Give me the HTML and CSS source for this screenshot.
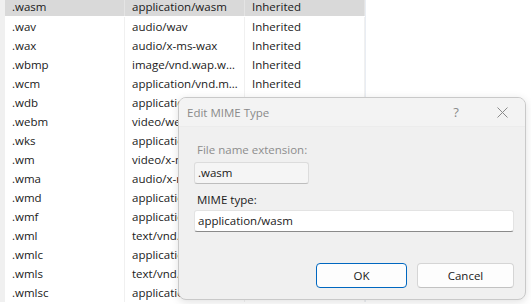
FILE: index.html
```
<!DOCTYPE html>
<html lang="en">

<head>
    <meta charset="utf-8">
    <title>MIME Types</title>
    <link rel="stylesheet" href="styles.css">
</head>

<body>
    <div class="screen">
        <div class="list">
            <div class="row selected"><span>.wasm</span><span>application/wasm</span><span>Inherited</span></div>
            <div class="row"><span>.wav</span><span>audio/wav</span><span>Inherited</span></div>
            <div class="row"><span>.wax</span><span>audio/x-ms-wax</span><span>Inherited</span></div>
            <div class="row"><span>.wbmp</span><span>image/vnd.wap.wbmp</span><span>Inherited</span></div>
            <div class="row"><span>.wcm</span><span>application/vnd.ms-works</span><span>Inherited</span></div>
            <div class="row"><span>.wdb</span><span>application/vnd.ms-works</span><span>Inherited</span></div>
            <div class="row"><span>.webm</span><span>video/webm</span><span>Inherited</span></div>
            <div class="row"><span>.wks</span><span>application/vnd.ms-works</span><span>Inherited</span></div>
            <div class="row"><span>.wm</span><span>video/x-ms-wm</span><span>Inherited</span></div>
            <div class="row"><span>.wma</span><span>audio/x-ms-wma</span><span>Inherited</span></div>
            <div class="row"><span>.wmd</span><span>application/x-ms-wmd</span><span>Inherited</span></div>
            <div class="row"><span>.wmf</span><span>application/x-msmetafile</span><span>Inherited</span></div>
            <div class="row"><span>.wml</span><span>text/vnd.wap.wml</span><span>Inherited</span></div>
            <div class="row"><span>.wmlc</span><span>application/vnd.wap.wmlc</span><span>Inherited</span></div>
            <div class="row"><span>.wmls</span><span>text/vnd.wap.wmlscript</span><span>Inherited</span></div>
            <div class="row"><span>.wmlsc</span><span>application/vnd.wap.wmlscriptc</span><span>Inherited</span></div>
        </div>

        <div class="dialog">
            <div class="titlebar">
                <span class="title">Edit MIME Type</span>
                <div class="caption_btns">
                    <span class="cap_btn help">?</span>
                    <span class="cap_btn">
                        <svg width="11" height="11" viewBox="0 0 11 11">
                            <path d="M0.5 0.5 L10.5 10.5 M10.5 0.5 L0.5 10.5" stroke="#8a8a8a" stroke-width="1" fill="none" />
                        </svg>
                    </span>
                </div>
            </div>
            <div class="dialog_body">
                <label class="lbl disabled">File name extension:</label>
                <div class="input small">.wasm</div>
                <label class="lbl">MIME type:</label>
                <div class="input wide">application/wasm</div>
                <div class="buttons">
                    <button class="btn default">OK</button>
                    <button class="btn cancel">Cancel</button>
                </div>
            </div>
        </div>
    </div>
</body>

</html>
```

FILE: styles.css
```
body {
    margin: 0;
    font-family: "Open Sans", "Noto Sans", sans-serif;
    font-size: 11.5px;
    color: #1a1a1a;
    background-color: white;
}

.screen {
    position: relative;
    width: 531px;
    height: 304px;
    overflow: hidden;
}

/* ---------- LIST ---------- */
.list {
    width: 366px;
    height: 100%;
    box-sizing: border-box;
    background-color: white;
    border-left: 5px solid #f0f0f0;
    border-right: 1px solid #e9edf3;
    margin-top: -2px;
}

.row {
    display: grid;
    grid-template-columns: 120px 120px 120px;
    height: 19px;
    line-height: 19px;
}

.row span {
    padding-left: 7px;
    padding-right: 4px;
    white-space: nowrap;
    overflow: hidden;
    text-overflow: ellipsis;
    border-right: 1px solid #f0f0f0;
}

.row.selected {
    background-color: #d9d9d9;
    height: 18px;
    line-height: 18px;
    margin-bottom: 1px;
}

.row.selected span {
    border-right-color: #e4e4e4;
}

/* ---------- DIALOG ---------- */
.dialog {
    position: absolute;
    left: 178px;
    top: 97px;
    width: 348px;
    height: 203px;
    box-sizing: border-box;
    background-color: #f0f0f0;
    border: 1px solid #c9c9c9;
    border-radius: 8px;
    box-shadow: 0 2px 8px rgba(0, 0, 0, 0.12);
    overflow: hidden;
}

.titlebar {
    display: flex;
    align-items: center;
    height: 28px;
    background-color: #f3f3f3;
    border-bottom: 1px solid #ececec;
}

.title {
    padding-left: 8px;
    color: #8a8a8a;
    flex: 1;
}

.caption_btns {
    display: flex;
}

.cap_btn {
    display: flex;
    width: 46px;
    height: 28px;
    align-items: center;
    justify-content: center;
    color: #8a8a8a;
    font-size: 13px;
}

.dialog_body {
    padding: 8px 12px 0 15px;
}

.lbl {
    display: block;
    padding-left: 3px;
    height: 18px;
    line-height: 18px;
    margin-top: 6px;
}

.lbl.disabled {
    color: #8d8d8d;
}

.input {
    box-sizing: border-box;
    height: 22px;
    line-height: 20px;
    padding-left: 3px;
    border: 1px solid #e3e3e3;
    border-bottom-color: #8a8a8a;
    border-radius: 3px;
    background-color: white;
    margin-top: 3px;
}

.input.small {
    width: 115px;
    background-color: #f5f5f5;
    border-color: #dcdcdc;
    border-bottom-color: #bdbdbd;
}

.input.wide {
    width: 320px;
    margin-top: 1px;
}

.input.small + .lbl {
    margin-top: 7px;
}

.buttons {
    display: flex;
    justify-content: flex-end;
    gap: 10px;
    margin-top: 31px;
    width: 320px;
}

.btn {
    font-family: "Open Sans", "Noto Sans", sans-serif;
    font-size: 11.5px;
    color: #1a1a1a;
    height: 25px;
    background-color: #fdfdfd;
    border: 1px solid #d5d5d5;
    border-bottom-color: #c2c2c2;
    border-radius: 4px;
    padding: 0;
}

.btn.default {
    width: 91px;
    border-color: #0067c0;
}

.btn.cancel {
    width: 97px;
}
```
